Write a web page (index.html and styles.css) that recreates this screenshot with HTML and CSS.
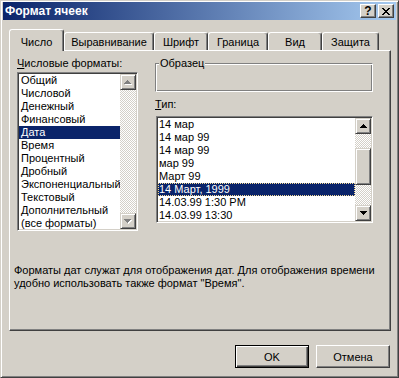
FILE: index.html
```html
<!DOCTYPE html>
<html lang="ru">
<head>
    <meta charset="UTF-8">
    <title>Формат ячеек</title>
    <link rel="stylesheet" href="styles.css">
</head>
<body>
    <div class="window">
        <div class="titlebar">
            <span class="title">Формат ячеек</span>
            <div class="caption-buttons">
                <span class="cap-btn help">?</span>
                <span class="cap-btn">
                    <svg width="8" height="7" viewBox="0 0 8 7" shape-rendering="crispEdges">
                        <path d="M0 0h2v1h1v1h2V1h1V0h2v1h-1v1h-1v1h-1v1h1v1h1v1h1v1H6V6H5V5H3v1H2v1H0V6h1V5h1V4h1V3H2V2H1V1H0z" fill="#000"/>
                    </svg>
                </span>
            </div>
        </div>

        <div class="tabs">
            <div class="tab active" style="width: 55px;">Число</div>
            <div class="tab" style="width: 90px;">Выравнивание</div>
            <div class="tab" style="width: 54px;">Шрифт</div>
            <div class="tab" style="width: 60px;">Граница</div>
            <div class="tab" style="width: 54px;">Вид</div>
            <div class="tab" style="width: 57px;">Защита</div>
        </div>

        <div class="panel">
            <div class="panel-top">
                <div class="col-left">
                    <div class="label"><u>Ч</u>исловые форматы:</div>
                    <div class="listbox cat-list">
                        <ul class="items">
                            <li>Общий</li>
                            <li>Числовой</li>
                            <li>Денежный</li>
                            <li>Финансовый</li>
                            <li class="sel">Дата</li>
                            <li>Время</li>
                            <li>Процентный</li>
                            <li>Дробный</li>
                            <li>Экспоненциальный</li>
                            <li>Текстовый</li>
                            <li>Дополнительный</li>
                            <li>(все форматы)</li>
                        </ul>
                        <div class="scrollbar">
                            <div class="sb-btn">
                                <svg width="8" height="5" viewBox="0 0 8 5" shape-rendering="crispEdges">
                                    <path d="M4 1h1v1h1v1h1v1h1v1H1V4h1V3h1V2h1z" fill="#fff"/>
                                    <path d="M3 0h1v1h1v1h1v1h1v1H0V3h1V2h1V1h1z" fill="#808080"/>
                                </svg>
                            </div>
                            <div class="sb-track"></div>
                            <div class="sb-btn">
                                <svg width="8" height="5" viewBox="0 0 8 5" shape-rendering="crispEdges">
                                    <path d="M1 1h7v1H7v1H6v1H5v1H4V4H3V3H2V2H1z" fill="#fff"/>
                                    <path d="M0 0h7v1H6v1H5v1H4v1H3V3H2V2H1V1H0z" fill="#808080"/>
                                </svg>
                            </div>
                        </div>
                    </div>
                </div>

                <div class="col-right">
                    <fieldset class="sample">
                        <legend>Образец</legend>
                        <div class="sample-body"></div>
                    </fieldset>
                    <div class="label type-label"><u>Т</u>ип:</div>
                    <div class="listbox type-list">
                        <ul class="items">
                            <li>14 мар</li>
                            <li>14 мар 99</li>
                            <li>14 мар 99</li>
                            <li>мар 99</li>
                            <li>Март 99</li>
                            <li class="sel focus">14 Март, 1999</li>
                            <li>14.03.99 1:30 PM</li>
                            <li>14.03.99 13:30</li>
                        </ul>
                        <div class="scrollbar">
                            <div class="sb-btn">
                                <svg width="7" height="4" viewBox="0 0 7 4" shape-rendering="crispEdges">
                                    <path d="M3 0h1v1h1v1h1v1h1v1H0V3h1V2h1V1h1z" fill="#000"/>
                                </svg>
                            </div>
                            <div class="sb-track">
                                <div class="sb-thumb"></div>
                            </div>
                            <div class="sb-btn">
                                <svg width="7" height="4" viewBox="0 0 7 4" shape-rendering="crispEdges">
                                    <path d="M0 0h7v1H6v1H5v1H4v1H3V3H2V2H1V1H0z" fill="#000"/>
                                </svg>
                            </div>
                        </div>
                    </div>
                </div>
            </div>

            <p class="desc">Форматы дат служат для отображения дат. Для отображения времени<br>удобно использовать также формат "Время".</p>
        </div>

        <div class="buttons">
            <button class="btn default">OK</button>
            <button class="btn">Отмена</button>
        </div>
    </div>
</body>
</html>
```

FILE: styles.css
```css
* {
    box-sizing: border-box;
}

body {
    margin: 0;
    font-family: "Liberation Sans", Arial, sans-serif;
    font-size: 11px;
    color: #000;
    background: #d4d0c8;
}

.window {
    width: 399px;
    height: 378px;
    background: #d4d0c8;
    border: 1px solid;
    border-color: #d4d0c8 #404040 #404040 #d4d0c8;
    box-shadow: inset 1px 1px #fff, inset -1px -1px #808080;
    padding: 1px 2px 2px 2px;
}

/* title bar */
.titlebar {
    height: 18px;
    display: flex;
    align-items: center;
    justify-content: space-between;
    padding: 0 2px;
    background: linear-gradient(to right, #0a246a, #a6caf0);
    color: #fff;
    font-weight: bold;
    font-size: 12px;
}

.caption-buttons {
    display: flex;
    gap: 2px;
}

.cap-btn {
    width: 16px;
    height: 14px;
    display: flex;
    align-items: center;
    justify-content: center;
    background: #d4d0c8;
    border: 1px solid;
    border-color: #fff #404040 #404040 #fff;
    box-shadow: inset -1px -1px #808080;
    color: #000;
    font-size: 12px;
    line-height: 12px;
}

/* tabs */
.tabs {
    display: flex;
    align-items: flex-end;
    margin-top: 9px;
    padding-left: 6px;
}

.tab {
    height: 18px;
    padding-top: 3px;
    line-height: 13px;
    text-align: center;
    white-space: nowrap;
    border: 1px solid;
    border-bottom: 0;
    border-color: #fff #404040 transparent #fff;
    border-radius: 3px 3px 0 0;
    box-shadow: inset -1px 0 #808080;
}

.tab.active {
    height: 22px;
    padding-top: 6px;
    margin-bottom: -1px;
    position: relative;
    z-index: 1;
    background: #d4d0c8;
}

/* panel */
.panel {
    margin-left: 6px;
    width: 382px;
    height: 281px;
    padding-top: 6px;
    border: 1px solid;
    border-color: #fff #404040 #404040 #fff;
    box-shadow: inset -1px -1px #808080;
}

.panel-top {
    display: flex;
    gap: 17px;
    padding-left: 7px;
}

.label {
    height: 13px;
    line-height: 13px;
    white-space: nowrap;
}

.listbox {
    display: flex;
    margin-top: 2px;
    padding: 1px;
    background: #fff;
    border: 1px solid;
    border-color: #808080 #fff #fff #808080;
    box-shadow: inset 1px 1px #404040, inset -1px -1px #d4d0c8;
}

.cat-list {
    width: 121px;
    height: 159px;
}

.items {
    flex: 1;
    margin: 0;
    padding: 0;
    list-style: none;
    overflow: hidden;
}

.items li {
    height: 13px;
    line-height: 13px;
    padding-left: 2px;
    white-space: nowrap;
}

.items li.sel {
    background: #0a246a;
    color: #fff;
}

.items li.focus {
    outline: 1px dotted #f5db95;
    outline-offset: -1px;
}

.scrollbar {
    width: 16px;
    flex: none;
    display: flex;
    flex-direction: column;
    background: repeating-conic-gradient(#fff 0 25%, #d4d0c8 0 50%) 0 0 / 2px 2px;
}

.sb-btn,
.sb-thumb {
    background: #d4d0c8;
    border: 1px solid;
    border-color: #d4d0c8 #404040 #404040 #d4d0c8;
    box-shadow: inset 1px 1px #fff, inset -1px -1px #808080;
}

.sb-btn {
    height: 16px;
    flex: none;
    display: flex;
    align-items: center;
    justify-content: center;
}

.sb-track {
    flex: 1;
}

.sb-thumb {
    height: 37px;
    margin-top: 14px;
}

.col-right {
    width: 218px;
}

.sample {
    margin: 0;
    padding: 0;
    border: 1px solid;
    border-color: #808080 #fff #fff #808080;
    box-shadow: inset 1px 1px #fff, inset -1px -1px #808080;
}

.sample legend {
    margin-left: 3px;
    padding: 0 1px;
    line-height: 13px;
    background: #d4d0c8;
}

.sample-body {
    height: 21px;
}

.type-label {
    margin-top: 6px;
}

.type-list {
    width: 217px;
    height: 107px;
    margin-top: 5px;
    margin-left: 1px;
}

.type-list .items li {
    padding-left: 1px;
}

.desc {
    margin: 33px 0 0;
    padding-left: 4px;
    line-height: 13px;
    white-space: nowrap;
}

/* dialog buttons */
.buttons {
    display: flex;
    justify-content: flex-end;
    gap: 7px;
    margin-top: 14px;
    padding-right: 6px;
}

.btn {
    width: 74px;
    height: 23px;
    padding: 0;
    font: inherit;
    color: #000;
    background: #d4d0c8;
    border: 1px solid;
    border-color: #fff #404040 #404040 #fff;
    box-shadow: inset -1px -1px #808080;
}

.btn.default {
    border-color: #000;
    box-shadow: inset 1px 1px #fff, inset -1px -1px #404040, inset -2px -2px #808080;
}
```
